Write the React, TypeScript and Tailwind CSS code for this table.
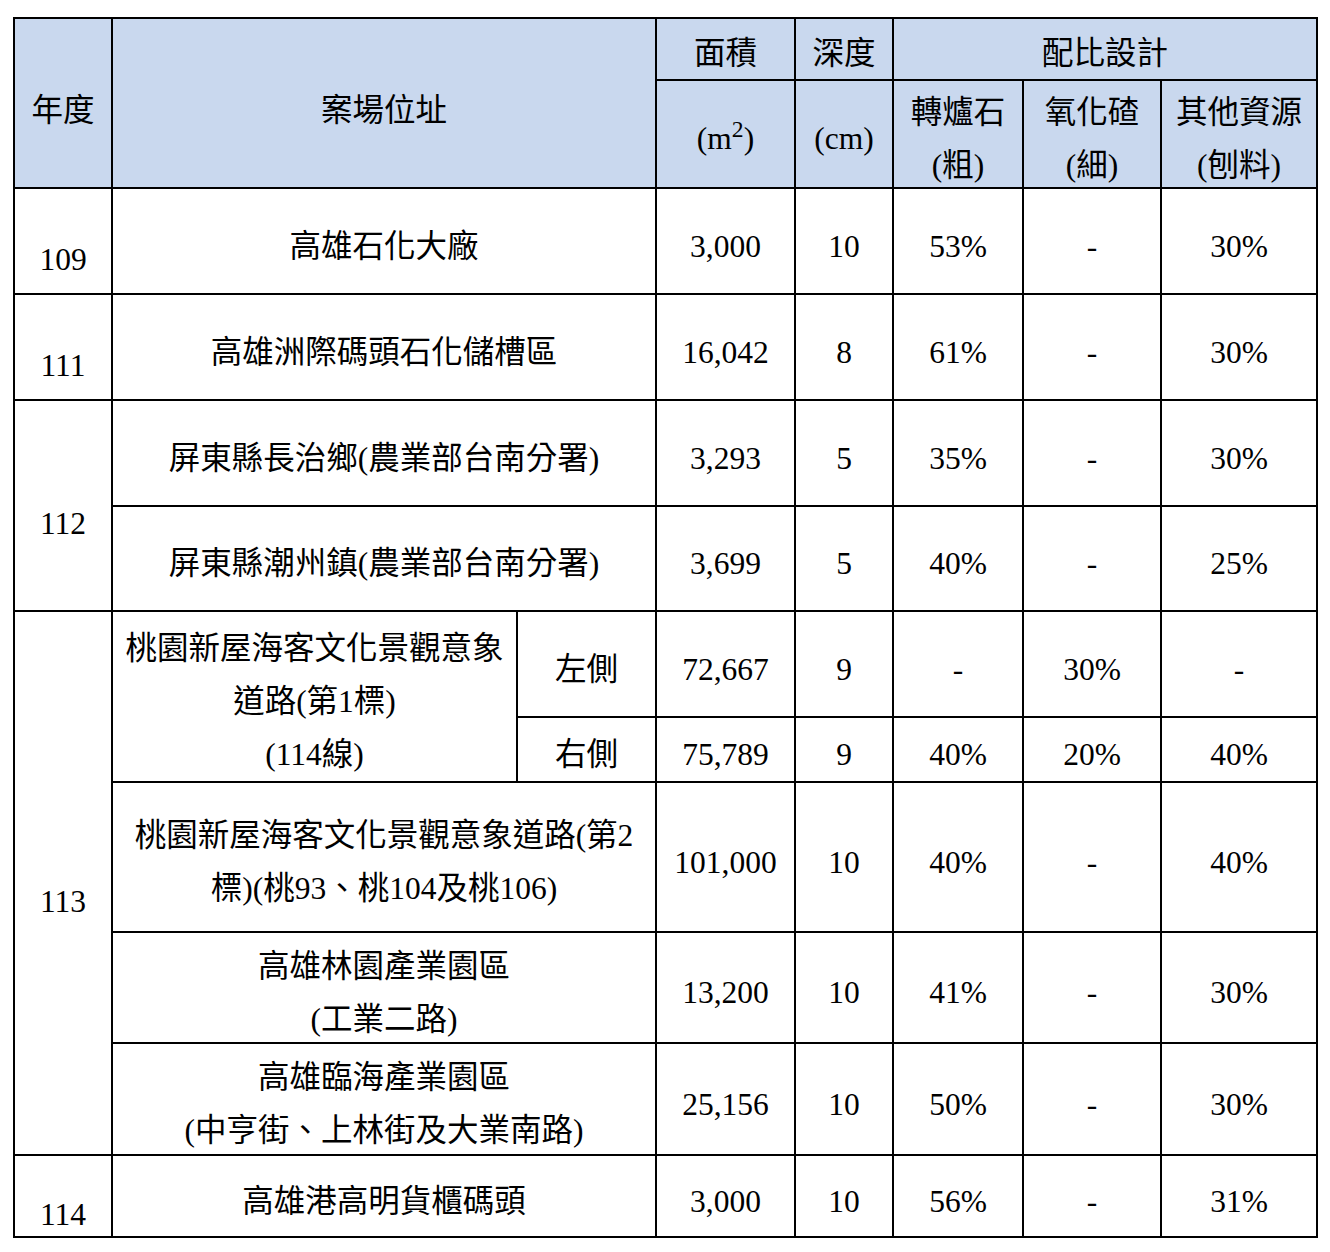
import React from "react";

type Cell = {
  text: React.ReactNode;
  col: string;
  row: string;
  head?: boolean;
  tall?: boolean;
  year?: boolean;
};

// grid placement classes are written out in full so Tailwind picks them up
const cells: Cell[] = [
  // header
  { text: "年度", col: "col-start-1 col-span-1", row: "row-start-1 row-span-2", head: true, tall: true },
  { text: "案場位址", col: "col-start-2 col-span-2", row: "row-start-1 row-span-2", head: true, tall: true },
  { text: "面積", col: "col-start-4 col-span-1", row: "row-start-1 row-span-1", head: true },
  { text: "深度", col: "col-start-5 col-span-1", row: "row-start-1 row-span-1", head: true },
  { text: "配比設計", col: "col-start-6 col-span-3", row: "row-start-1 row-span-1", head: true },
  {
    text: (
      <>
        (m<sup>2</sup>)
      </>
    ),
    col: "col-start-4 col-span-1",
    row: "row-start-2 row-span-1",
    head: true,
  },
  { text: "(cm)", col: "col-start-5 col-span-1", row: "row-start-2 row-span-1", head: true },
  {
    text: (
      <>
        轉爐石
        <br />
        (粗)
      </>
    ),
    col: "col-start-6 col-span-1",
    row: "row-start-2 row-span-1",
    head: true,
  },
  {
    text: (
      <>
        氧化碴
        <br />
        (細)
      </>
    ),
    col: "col-start-7 col-span-1",
    row: "row-start-2 row-span-1",
    head: true,
  },
  {
    text: (
      <>
        其他資源
        <br />
        (刨料)
      </>
    ),
    col: "col-start-8 col-span-1",
    row: "row-start-2 row-span-1",
    head: true,
  },

  // years
  { text: "109", col: "col-start-1 col-span-1", row: "row-start-3 row-span-1", year: true },
  { text: "111", col: "col-start-1 col-span-1", row: "row-start-4 row-span-1", year: true },
  { text: "112", col: "col-start-1 col-span-1", row: "row-start-5 row-span-2", year: true },
  { text: "113", col: "col-start-1 col-span-1", row: "row-start-7 row-span-5", year: true },
  { text: "114", col: "col-start-1 col-span-1", row: "row-start-12 row-span-1", year: true },

  // addresses
  { text: "高雄石化大廠", col: "col-start-2 col-span-2", row: "row-start-3 row-span-1" },
  { text: "高雄洲際碼頭石化儲槽區", col: "col-start-2 col-span-2", row: "row-start-4 row-span-1" },
  { text: "屏東縣長治鄉(農業部台南分署)", col: "col-start-2 col-span-2", row: "row-start-5 row-span-1" },
  { text: "屏東縣潮州鎮(農業部台南分署)", col: "col-start-2 col-span-2", row: "row-start-6 row-span-1" },
  {
    text: (
      <>
        桃園新屋海客文化景觀意象
        <br />
        道路(第1標)
        <br />
        (114線)
      </>
    ),
    col: "col-start-2 col-span-1",
    row: "row-start-7 row-span-2",
  },
  { text: "左側", col: "col-start-3 col-span-1", row: "row-start-7 row-span-1" },
  { text: "右側", col: "col-start-3 col-span-1", row: "row-start-8 row-span-1" },
  {
    text: (
      <>
        桃園新屋海客文化景觀意象道路(第2
        <br />
        標)(桃93、桃104及桃106)
      </>
    ),
    col: "col-start-2 col-span-2",
    row: "row-start-9 row-span-1",
  },
  {
    text: (
      <>
        高雄林園產業園區
        <br />
        (工業二路)
      </>
    ),
    col: "col-start-2 col-span-2",
    row: "row-start-10 row-span-1",
  },
  {
    text: (
      <>
        高雄臨海產業園區
        <br />
        (中亨街、上林街及大業南路)
      </>
    ),
    col: "col-start-2 col-span-2",
    row: "row-start-11 row-span-1",
  },
  { text: "高雄港高明貨櫃碼頭", col: "col-start-2 col-span-2", row: "row-start-12 row-span-1" },
];

const rowClass = [
  "row-start-3",
  "row-start-4",
  "row-start-5",
  "row-start-6",
  "row-start-7",
  "row-start-8",
  "row-start-9",
  "row-start-10",
  "row-start-11",
  "row-start-12",
];

const colClass = ["col-start-4", "col-start-5", "col-start-6", "col-start-7", "col-start-8"];

// area, depth, 轉爐石, 氧化碴, 其他資源
const data: string[][] = [
  ["3,000", "10", "53%", "-", "30%"],
  ["16,042", "8", "61%", "-", "30%"],
  ["3,293", "5", "35%", "-", "30%"],
  ["3,699", "5", "40%", "-", "25%"],
  ["72,667", "9", "-", "30%", "-"],
  ["75,789", "9", "40%", "20%", "40%"],
  ["101,000", "10", "40%", "-", "40%"],
  ["13,200", "10", "41%", "-", "30%"],
  ["25,156", "10", "50%", "-", "30%"],
  ["3,000", "10", "56%", "-", "31%"],
];

function pad(c: Cell) {
  if (c.year) return "bg-white pt-[36px]";
  if (c.tall) return "bg-[#c9d8ee] pt-[14px]";
  if (c.head) return "bg-[#c9d8ee] pt-[9px]";
  return "bg-white pt-[10px]";
}

export default function App() {
  return (
    <div className="w-[1330px] h-[1252px] bg-white pt-[17px] pl-[13px] font-['Liberation_Serif','Noto_Sans_CJK_TC',serif] text-[31.5px] leading-[53px] text-black">
      <div className="grid w-max gap-[2px] bg-black p-[2px] grid-cols-[96px_403px_137px_137px_96px_128px_136px_154px] grid-rows-[60px_106px_104px_104px_104px_103px_104px_63px_148px_109px_110px_80px]">
        {cells.map((c, i) => (
          <div key={i} className={`${c.col} ${c.row} flex items-center justify-center text-center ${pad(c)}`}>
            <div>{c.text}</div>
          </div>
        ))}
        {data.map((row, r) =>
          row.map((v, k) => (
            <div
              key={`${r}-${k}`}
              className={`${colClass[k]} col-span-1 ${rowClass[r]} row-span-1 flex items-center justify-center bg-white pt-[10px] text-center`}
            >
              {v}
            </div>
          ))
        )}
      </div>
    </div>
  );
}
